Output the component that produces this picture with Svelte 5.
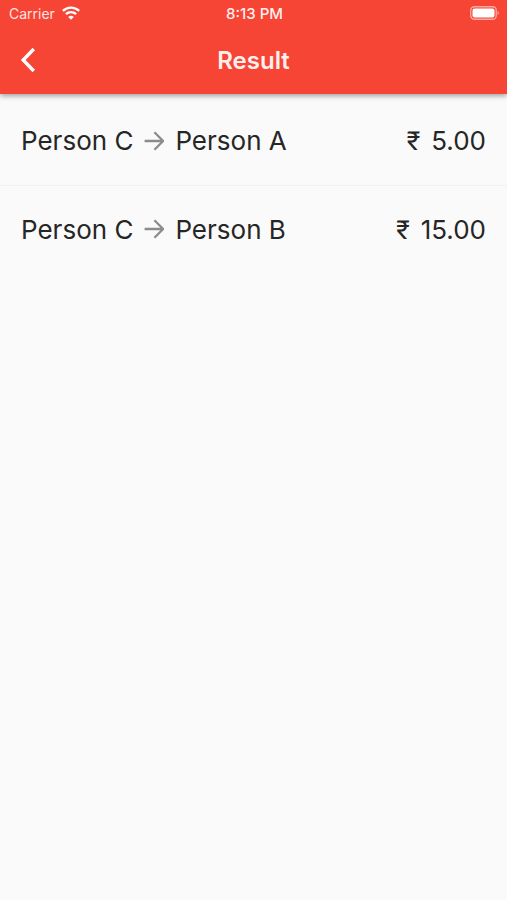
<script lang="ts">
  type Transfer = {
    from: string;
    to: string;
    amount: number;
  };

  const {
    title = "Result",
    time = "8:13 PM",
    carrier = "Carrier",
    currency = "₹",
    transfers = [
      { from: "Person C", to: "Person A", amount: 5 },
      { from: "Person C", to: "Person B", amount: 15 }
    ]
  }: {
    title?: string;
    time?: string;
    carrier?: string;
    currency?: string;
    transfers?: Transfer[];
  } = $props();
</script>

<div class="screen">
  <header>
    <div class="status-bar">
      <span class="carrier">
        {carrier}
        <svg class="wifi" viewBox="0 0 18 14" aria-hidden="true">
          <path d="M.9 4.9a11.6 11.6 0 0 1 16.2 0" />
          <path d="M3.9 8.2a7.4 7.4 0 0 1 10.2 0" />
          <path class="dot" d="M9 13.8 6.2 11a4.1 4.1 0 0 1 5.6 0Z" />
        </svg>
      </span>
      <span class="time">{time}</span>
      <svg class="battery" viewBox="0 0 30 14" aria-hidden="true">
        <rect class="shell" x="0.75" y="0.75" width="25.5" height="12.5" rx="3.5" />
        <rect class="charge" x="2.5" y="2.5" width="22" height="9" rx="2" />
        <path class="cap" d="M27.6 5c1.6.4 1.6 3.6 0 4Z" />
      </svg>
    </div>
    <div class="app-bar">
      <button type="button" class="back" aria-label="Back">
        <svg viewBox="0 0 16 26" aria-hidden="true">
          <path d="M13.8 2 3.2 13l10.6 11" />
        </svg>
      </button>
      <h1>{title}</h1>
    </div>
  </header>

  <ul>
    {#each transfers as transfer}
      <li>
        <span class="people">
          {transfer.from}
          <svg class="arrow" viewBox="0 0 20 20" role="img" aria-label="pays">
            <path d="M.6 10h18M10.4 1.2l8.8 8.8-8.8 8.8" />
          </svg>
          {transfer.to}
        </span>
        <span class="amount">
          <span class="currency">{currency}</span>
          {transfer.amount.toFixed(2)}
        </span>
      </li>
    {/each}
  </ul>
</div>

<style>
  :global(body) {
    background: #fafafa;
  }

  .screen {
    color: #262626;
    font-family: Inter, "Liberation Sans", sans-serif;
  }

  header {
    position: relative;
    background: #f64435;
    box-shadow: 0 2px 5px rgba(0, 0, 0, 0.36);
    color: #fff;
  }

  .status-bar {
    display: grid;
    grid-template-columns: 1fr auto 1fr;
    align-items: center;
    height: 26px;
    padding: 0 7px 0 9px;
    font-size: 14px;
  }

  .carrier {
    display: flex;
    align-items: center;
    gap: 7px;
    color: #ffe3e0;
  }

  .wifi {
    width: 18px;
    height: 14px;
    fill: none;
    stroke: #fff;
    stroke-width: 2.4;
  }

  .wifi .dot {
    fill: #fff;
    stroke: none;
  }

  .time {
    color: #fff0ee;
    font-size: 15px;
    font-weight: 500;
  }

  .battery {
    justify-self: end;
    width: 30px;
    height: 14px;
  }

  .shell {
    fill: none;
    stroke: #fbaaa3;
    stroke-width: 1.3;
  }

  .charge {
    fill: #fff;
  }

  .cap {
    fill: #fbaaa3;
  }

  .app-bar {
    display: grid;
    grid-template-columns: 56px 1fr 56px;
    align-items: center;
    height: 68px;
  }

  .back {
    display: flex;
    align-items: center;
    justify-content: center;
    height: 56px;
    padding: 0;
    border: 0;
    background: none;
    color: inherit;
    cursor: pointer;
  }

  .back svg {
    width: 16px;
    height: 26px;
    fill: none;
    stroke: currentColor;
    stroke-width: 3.4;
  }

  h1 {
    margin: 0;
    color: #fff0ee;
    font-size: 24px;
    font-weight: 600;
    text-align: center;
  }

  ul {
    margin: 0;
    padding: 3px 0 0;
    list-style: none;
  }

  li {
    display: flex;
    box-sizing: border-box;
    align-items: center;
    justify-content: space-between;
    height: 88px;
    padding: 0 21px 1px;
    font-size: 26px;
  }

  li + li {
    border-top: 1px solid #f2f2f2;
  }

  .people {
    display: flex;
    align-items: center;
    gap: 11px;
  }

  .arrow {
    width: 20px;
    height: 20px;
    fill: none;
    stroke: #8c8c8c;
    stroke-width: 2.3;
  }

  .amount {
    display: flex;
    align-items: baseline;
    gap: 11px;
    white-space: nowrap;
  }

  .currency {
    font-family: Roboto, Inter, sans-serif;
  }
</style>
